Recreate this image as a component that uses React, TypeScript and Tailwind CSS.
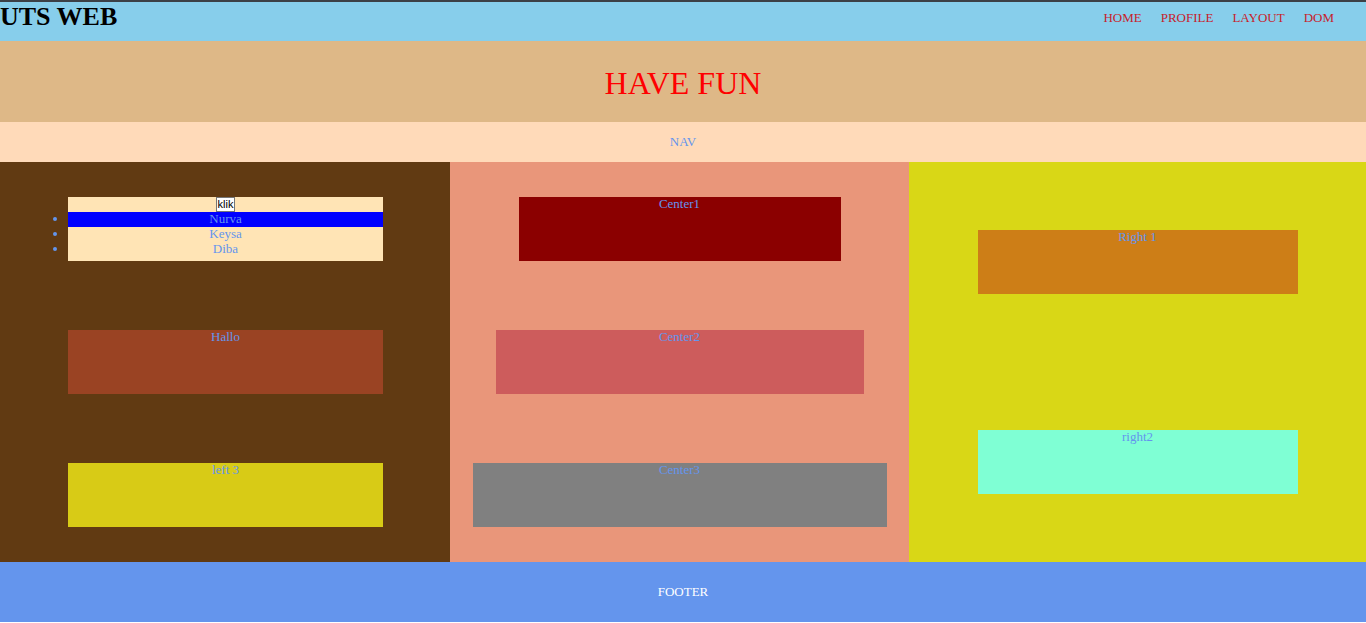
import React from 'react';

const serif = { fontFamily: '"Liberation Serif", "Times New Roman", serif' };

function Block({ label, className }: { label: string; className: string }) {
  return (
    <div className={`h-[64px] text-center text-[13px] leading-[14px] text-[#6495ED] ${className}`}>
      {label}
    </div>
  );
}

export default function App() {
  const links = ['HOME', 'PROFILE', 'LAYOUT', 'DOM'];
  return (
    <div className="w-[1366px] h-[623px] bg-white overflow-hidden" style={serif}>
      {/* Header */}
      <div className="h-[41px] bg-[#87CEEB] border-t-2 border-[#3c4046] flex items-start justify-between">
        <div className="text-[26px] font-bold leading-[29px] text-black">UTS WEB</div>
        <div className="flex gap-[19px] pr-[32px] pt-[6px] text-[13px] text-[#c8202a]">
          {links.map((l) => (
            <span key={l}>{l}</span>
          ))}
        </div>
      </div>
      {/* Banner */}
      <div className="h-[81px] bg-[#DEB887] flex items-center justify-center">
        <span className="text-[32px] text-[#ff0000] leading-none pt-[2px]">HAVE FUN</span>
      </div>
      {/* Nav */}
      <div className="h-[40px] bg-[#FFDAB9] flex items-center justify-center text-[13px] text-[#6495ED]">
        NAV
      </div>
      {/* Main */}
      <div className="h-[400px] flex">
        <div className="w-[450px] bg-[#613A12] flex flex-col justify-between py-[35px] pl-[68px]">
          <div className="w-[315px] h-[64px] bg-[#FFE4B5] text-center text-[13px] text-[#6495ED]">
            <div className="h-[15px] flex justify-center">
              <button
                className="h-[15px] px-[1px] border border-[#767676] bg-white text-black text-[11px] leading-[11px]"
                style={{ fontFamily: '"Liberation Sans", Arial, sans-serif' }}
              >
                klik
              </button>
            </div>
            <ul className="list-disc list-outside marker:text-[#6495ED] leading-[14px]">
              <li className="bg-[#0000FF] pb-[1px]">Nurva</li>
              <li className="pb-[1px]">Keysa</li>
              <li className="pb-[1px]">Diba</li>
            </ul>
          </div>
          <Block label="Hallo" className="w-[315px] bg-[#9A4323]" />
          <Block label="left 3" className="w-[315px] bg-[#D8CB16]" />
        </div>
        <div className="w-[459px] bg-[#E9967A] flex flex-col items-center justify-between py-[35px]">
          <Block label="Center1" className="w-[322px] bg-[#8B0000]" />
          <Block label="Center2" className="w-[368px] bg-[#CD5C5C]" />
          <Block label="Center3" className="w-[414px] bg-[#808080]" />
        </div>
        <div className="flex-1 bg-[#D9D716] flex flex-col items-center justify-between py-[68px]">
          <Block label="Right 1" className="w-[320px] bg-[#CD7E17]" />
          <Block label="right2" className="w-[320px] bg-[#7FFFD4]" />
        </div>
      </div>
      {/* Footer */}
      <div className="h-[60px] bg-[#6495ED] flex items-center justify-center text-[13px] text-white">
        FOOTER
      </div>
    </div>
  );
}
